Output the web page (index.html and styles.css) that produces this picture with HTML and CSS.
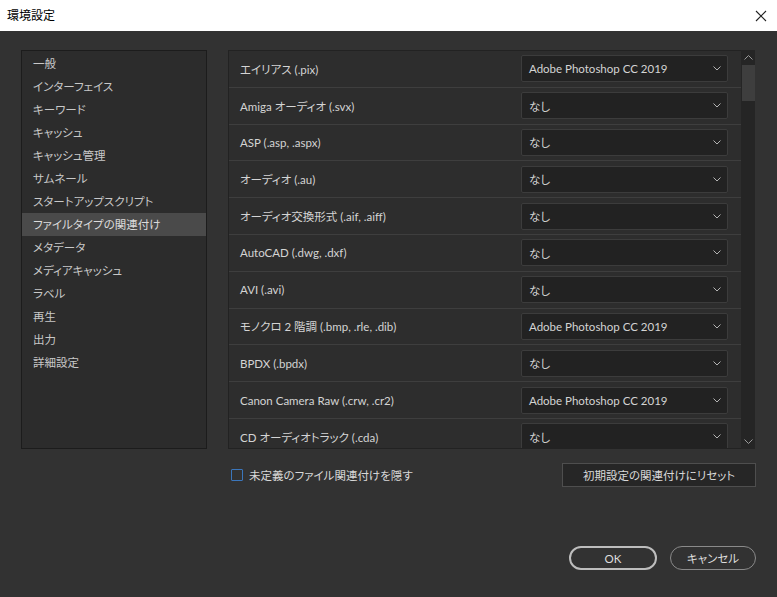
FILE: index.html
```html
<!DOCTYPE html>
<html lang="ja">
<head>
<meta charset="utf-8">
<title>環境設定</title>
<link rel="stylesheet" href="styles.css">
</head>
<body>
<div class="window">
  <div class="titlebar">
    <span class="title">環境設定</span>
    <svg class="close" width="12" height="12" viewBox="0 0 12 12"><path d="M1 1 L11 11 M11 1 L1 11" stroke="#222" stroke-width="1.1" fill="none"/></svg>
  </div>
  <div class="content">
    <div class="top">
      <ul class="nav">
        <li>一般</li>
        <li>インターフェイス</li>
        <li>キーワード</li>
        <li>キャッシュ</li>
        <li>キャッシュ管理</li>
        <li>サムネール</li>
        <li>スタートアップスクリプト</li>
        <li class="sel">ファイルタイプの関連付け</li>
        <li>メタデータ</li>
        <li>メディアキャッシュ</li>
        <li>ラベル</li>
        <li>再生</li>
        <li>出力</li>
        <li>詳細設定</li>
      </ul>
      <div class="listwrap">
        <div class="list">
          <div class="row"><span class="label">エイリアス (.pix)</span><div class="select"><span>Adobe Photoshop CC 2019</span><svg class="chev" width="8" height="5" viewBox="0 0 8 5"><path d="M0.5 0.5 L4 4 L7.5 0.5" stroke="#b4b4b4" fill="none"/></svg></div></div>
          <div class="row"><span class="label">Amiga オーディオ (.svx)</span><div class="select"><span>なし</span><svg class="chev" width="8" height="5" viewBox="0 0 8 5"><path d="M0.5 0.5 L4 4 L7.5 0.5" stroke="#b4b4b4" fill="none"/></svg></div></div>
          <div class="row"><span class="label">ASP (.asp, .aspx)</span><div class="select"><span>なし</span><svg class="chev" width="8" height="5" viewBox="0 0 8 5"><path d="M0.5 0.5 L4 4 L7.5 0.5" stroke="#b4b4b4" fill="none"/></svg></div></div>
          <div class="row"><span class="label">オーディオ (.au)</span><div class="select"><span>なし</span><svg class="chev" width="8" height="5" viewBox="0 0 8 5"><path d="M0.5 0.5 L4 4 L7.5 0.5" stroke="#b4b4b4" fill="none"/></svg></div></div>
          <div class="row"><span class="label">オーディオ交換形式 (.aif, .aiff)</span><div class="select"><span>なし</span><svg class="chev" width="8" height="5" viewBox="0 0 8 5"><path d="M0.5 0.5 L4 4 L7.5 0.5" stroke="#b4b4b4" fill="none"/></svg></div></div>
          <div class="row"><span class="label">AutoCAD (.dwg, .dxf)</span><div class="select"><span>なし</span><svg class="chev" width="8" height="5" viewBox="0 0 8 5"><path d="M0.5 0.5 L4 4 L7.5 0.5" stroke="#b4b4b4" fill="none"/></svg></div></div>
          <div class="row"><span class="label">AVI (.avi)</span><div class="select"><span>なし</span><svg class="chev" width="8" height="5" viewBox="0 0 8 5"><path d="M0.5 0.5 L4 4 L7.5 0.5" stroke="#b4b4b4" fill="none"/></svg></div></div>
          <div class="row"><span class="label">モノクロ 2 階調 (.bmp, .rle, .dib)</span><div class="select"><span>Adobe Photoshop CC 2019</span><svg class="chev" width="8" height="5" viewBox="0 0 8 5"><path d="M0.5 0.5 L4 4 L7.5 0.5" stroke="#b4b4b4" fill="none"/></svg></div></div>
          <div class="row"><span class="label">BPDX (.bpdx)</span><div class="select"><span>なし</span><svg class="chev" width="8" height="5" viewBox="0 0 8 5"><path d="M0.5 0.5 L4 4 L7.5 0.5" stroke="#b4b4b4" fill="none"/></svg></div></div>
          <div class="row"><span class="label">Canon Camera Raw (.crw, .cr2)</span><div class="select"><span>Adobe Photoshop CC 2019</span><svg class="chev" width="8" height="5" viewBox="0 0 8 5"><path d="M0.5 0.5 L4 4 L7.5 0.5" stroke="#b4b4b4" fill="none"/></svg></div></div>
          <div class="row"><span class="label">CD オーディオトラック (.cda)</span><div class="select"><span>なし</span><svg class="chev" width="8" height="5" viewBox="0 0 8 5"><path d="M0.5 0.5 L4 4 L7.5 0.5" stroke="#b4b4b4" fill="none"/></svg></div></div>
          <div class="row"><span class="label">Cineon (.cin, .sdpx, .dpx, .fido)</span><div class="select"><span>なし</span><svg class="chev" width="8" height="5" viewBox="0 0 8 5"><path d="M0.5 0.5 L4 4 L7.5 0.5" stroke="#b4b4b4" fill="none"/></svg></div></div>
        </div>
        <div class="scrollbar">
          <svg class="arrow" width="9" height="5" viewBox="0 0 9 5"><path d="M0.5 4.5 L4.5 0.5 L8.5 4.5" stroke="#9a9a9a" fill="none"/></svg>
          <div class="thumb"></div>
          <div class="track"></div>
          <svg class="arrow" width="9" height="5" viewBox="0 0 9 5"><path d="M0.5 0.5 L4.5 4.5 L8.5 0.5" stroke="#9a9a9a" fill="none"/></svg>
        </div>
      </div>
    </div>
    <div class="options">
      <div class="check"><span class="box"></span><span class="checklabel">未定義のファイル関連付けを隠す</span></div>
      <div class="reset">初期設定の関連付けにリセット</div>
    </div>
    <div class="buttons">
      <div class="btn ok">OK</div>
      <div class="btn cancel">キャンセル</div>
    </div>
  </div>
</div>
</body>
</html>
```
FILE: styles.css
```css
html, body {
  margin: 0;
  padding: 0;
  background: #323232;
}
body {
  font-family: "Lato", "Noto Sans CJK JP", "Noto Sans", sans-serif;
  font-size: 11.5px;
  font-weight: 400;
  font-feature-settings: "palt";
  color: #d2d2d2;
}
.window {
  width: 777px;
  height: 597px;
  overflow: hidden;
  background: #323232;
}
.titlebar {
  height: 31px;
  background: #ffffff;
  display: flex;
  align-items: center;
  justify-content: space-between;
  padding: 0 10px 0 7px;
  box-sizing: border-box;
}
.title {
  color: #000;
  font-size: 12px;
  line-height: 1;
}
.close {
  display: block;
}
.content {
  padding: 19px 0 0 21px;
}
.top {
  display: flex;
  gap: 21px;
  height: 399px;
}
.nav {
  list-style: none;
  margin: 0;
  padding: 1px 0 0;
  width: 186px;
  box-sizing: border-box;
  background: #2c2c2c;
  border: 1px solid #1c1c1c;
}
.nav li {
  height: 23px;
  line-height: 23px;
  padding-left: 11px;
  color: #c8c8c8;
  white-space: nowrap;
}
.nav li.sel {
  background: #4a4a4a;
  color: #dcdcdc;
}
.listwrap {
  display: flex;
  height: 399px;
}
.list {
  width: 513px;
  height: 399px;
  box-sizing: border-box;
  border: 1px solid #222;
  border-right: none;
  background: #2d2d2d;
  overflow: hidden;
}
.row {
  height: 35.8px;
  border-bottom: 1px solid #3e3e3e;
  display: flex;
  align-items: center;
  justify-content: space-between;
  padding: 0 13px 0 11px;
}
.label {
  color: #d4d4d4;
  white-space: nowrap;
}
.select {
  width: 207px;
  height: 27px;
  box-sizing: border-box;
  background: #222222;
  border: 1px solid #3c3c3c;
  border-radius: 2px;
  display: flex;
  align-items: center;
  justify-content: space-between;
  padding: 0 6px 0 7px;
  color: #d4d4d4;
}
.chev {
  display: block;
}
.scrollbar {
  width: 14px;
  height: 399px;
  background: #252525;
  display: flex;
  flex-direction: column;
  align-items: center;
}
.scrollbar .arrow {
  display: block;
  margin: 5px 0;
}
.thumb {
  width: 13px;
  height: 36px;
  background: #3e3e3e;
}
.track {
  flex: 1;
}
.options {
  display: flex;
  justify-content: space-between;
  align-items: center;
  margin-top: 14px;
  padding-left: 210px;
  width: 735px;
  height: 24px;
  box-sizing: border-box;
}
.check {
  display: flex;
  align-items: center;
  gap: 6px;
  color: #d8d8d8;
}
.checklabel {
  white-space: nowrap;
}
.box {
  width: 12px;
  height: 12px;
  flex: none;
  box-sizing: border-box;
  border: 1px solid #3b76bb;
  border-radius: 1px;
}
.reset {
  width: 194px;
  height: 24px;
  box-sizing: border-box;
  background: #262626;
  border: 1px solid #4e4e4e;
  display: flex;
  align-items: center;
  justify-content: center;
  color: #d8d8d8;
  white-space: nowrap;
}
.buttons {
  display: flex;
  justify-content: flex-end;
  gap: 13px;
  margin-top: 59px;
  width: 735px;
}
.btn {
  height: 24px;
  box-sizing: border-box;
  border-radius: 12px;
  display: flex;
  align-items: center;
  justify-content: center;
  color: #dedede;
}
.ok {
  width: 88px;
  border: 2px solid #bdbdbd;
}
.cancel {
  width: 86px;
  border: 1.5px solid #8a8a8a;
}
```
